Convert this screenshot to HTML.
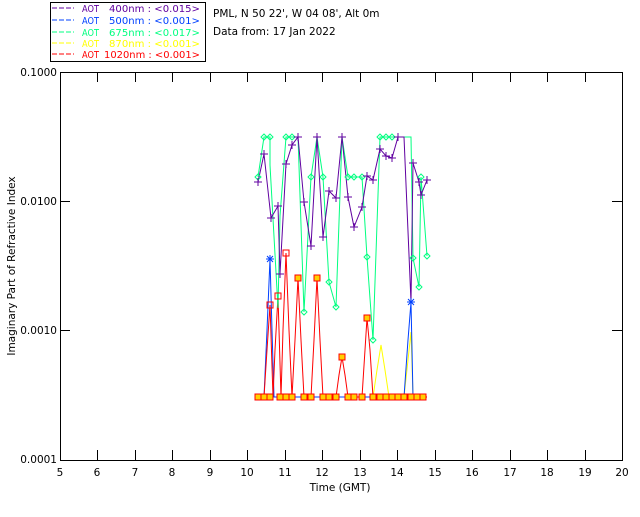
<!DOCTYPE html>
<html><head><style>
body{margin:0;background:#fff;width:640px;height:512px;overflow:hidden}
svg{font-family:"DejaVu Sans","Liberation Sans",sans-serif;font-size:10.5px}
</style></head><body>
<svg width="640" height="512" viewBox="0 0 640 512">
<rect x="50.5" y="2.5" width="155" height="59" fill="none" stroke="#000"/>
<g font-size="10">
<line x1="52" y1="8" x2="74" y2="8" stroke="#6000a0" stroke-dasharray="5,2"/><text x="82" y="12" fill="#6000a0" textLength="17" lengthAdjust="spacingAndGlyphs">AOT</text><text x="109" y="12" fill="#6000a0" textLength="91" lengthAdjust="spacingAndGlyphs">400nm : &lt;0.015&gt;</text>
<line x1="52" y1="20" x2="74" y2="20" stroke="#0040ff" stroke-dasharray="5,2"/><text x="82" y="24" fill="#0040ff" textLength="17" lengthAdjust="spacingAndGlyphs">AOT</text><text x="109" y="24" fill="#0040ff" textLength="91" lengthAdjust="spacingAndGlyphs">500nm : &lt;0.001&gt;</text>
<line x1="52" y1="32" x2="74" y2="32" stroke="#00ff80" stroke-dasharray="5,2"/><text x="82" y="36" fill="#00ff80" textLength="17" lengthAdjust="spacingAndGlyphs">AOT</text><text x="109" y="36" fill="#00ff80" textLength="91" lengthAdjust="spacingAndGlyphs">675nm : &lt;0.017&gt;</text>
<line x1="52" y1="43" x2="74" y2="43" stroke="#ffff00" stroke-dasharray="5,2"/><text x="82" y="47" fill="#ffff00" textLength="17" lengthAdjust="spacingAndGlyphs">AOT</text><text x="109" y="47" fill="#ffff00" textLength="91" lengthAdjust="spacingAndGlyphs">870nm : &lt;0.001&gt;</text>
<line x1="52" y1="54" x2="74" y2="54" stroke="#ff0000" stroke-dasharray="5,2"/><text x="82" y="58" fill="#ff0000" textLength="17" lengthAdjust="spacingAndGlyphs">AOT</text><text x="104" y="58" fill="#ff0000" textLength="96" lengthAdjust="spacingAndGlyphs">1020nm : &lt;0.001&gt;</text>
</g>
<text x="213" y="17">PML, N 50 22', W 04 08', Alt 0m</text>
<text x="213" y="35">Data from: 17 Jan 2022</text>
<rect x="60.5" y="72.5" width="562" height="388" fill="none" stroke="#000"/>
<g stroke="#000" id="ticks">
<path d="M97.5 72v10M135.5 72v10M172.5 72v10M210.5 72v10M247.5 72v10M285.5 72v10M322.5 72v10M360.5 72v10M397.5 72v10M435.5 72v10M472.5 72v10M510.5 72v10M547.5 72v10M585.5 72v10"/>
<path d="M97.5 460v-10M135.5 460v-10M172.5 460v-10M210.5 460v-10M247.5 460v-10M285.5 460v-10M322.5 460v-10M360.5 460v-10M397.5 460v-10M435.5 460v-10M472.5 460v-10M510.5 460v-10M547.5 460v-10M585.5 460v-10"/>
<path d="M60 201.5h10M60 330.5h10M622 201.5h-10M622 330.5h-10"/>
</g>
<g text-anchor="end">
<text x="57" y="76">0.1000</text><text x="57" y="205">0.0100</text><text x="57" y="334">0.0010</text><text x="57" y="463">0.0001</text>
</g>
<g text-anchor="middle">
<text x="60" y="476">5</text><text x="97" y="476">6</text><text x="135" y="476">7</text><text x="172" y="476">8</text><text x="210" y="476">9</text><text x="247" y="476">10</text><text x="285" y="476">11</text><text x="322" y="476">12</text><text x="360" y="476">13</text><text x="397" y="476">14</text><text x="435" y="476">15</text><text x="472" y="476">16</text><text x="510" y="476">17</text><text x="547" y="476">18</text><text x="585" y="476">19</text><text x="622" y="476">20</text>
<text x="340" y="491">Time (GMT)</text>
<text transform="translate(15,266) rotate(-90)">Imaginary Part of Refractive Index</text>
</g>
<polyline fill="none" stroke="#ffff00" stroke-width="1" points="373,397 377,370 381,345 385,370 389,397 404,397 408,360 411,332 413,397"/>
<polyline fill="none" stroke="#0040ff" stroke-width="1" points="264,397 267,330 270,259 272,330 274,397 404,397 408,340 411,302 413,397"/>
<polyline fill="none" stroke="#ff0000" stroke-width="1" points="258,397 264,397 267,350 270,305 273,397 275,350 278,296 281,397 283,330 286,253 289,330 292,397 295,340 298,278 301,340 304,397 311,397 314,340 317,278 320,340 323,397 329,397 336,397 339,375 342,357 345,375 348,397 354,397 362,397 365,350 367,318 370,350 373,397 427,397"/>
<polyline fill="none" stroke="#00ff80" stroke-width="1" points="258,177 264,137 270,137 270,165 278,308 280,216 286,137 292,137 298,137 304,312 311,177 317,137 323,177 329,282 336,307 342,137 348,177 354,177 362,177 367,257 373,340 380,137 386,137 392,137 398,137 404,137 411,137 413,258 419,287 421,177 427,256"/>
<polyline fill="none" stroke="#6000a0" stroke-width="1" points="258,182 264,154 271,218 278,206 280,274 286,164 292,145 298,137 304,202 311,246 317,137 323,237 329,191 336,198 342,137 348,197 354,227 362,207 367,176 373,180 380,149 386,156 392,158 398,137 404,137 411,302 413,163 419,182 421,195 427,180"/>
<g fill="none" stroke="#00ff80">
<path d="M258 174l3 3-3 3-3-3zM264 134l3 3-3 3-3-3zM270 134l3 3-3 3-3-3zM286 134l3 3-3 3-3-3zM292 134l3 3-3 3-3-3zM311 174l3 3-3 3-3-3zM323 174l3 3-3 3-3-3zM329 279l3 3-3 3-3-3zM336 304l3 3-3 3-3-3zM348 174l3 3-3 3-3-3zM354 174l3 3-3 3-3-3zM362 174l3 3-3 3-3-3zM367 254l3 3-3 3-3-3zM373 337l3 3-3 3-3-3zM380 134l3 3-3 3-3-3zM386 134l3 3-3 3-3-3zM392 134l3 3-3 3-3-3zM413 255l3 3-3 3-3-3zM419 284l3 3-3 3-3-3zM421 174l3 3-3 3-3-3zM427 253l3 3-3 3-3-3zM304 309l3 3-3 3-3-3z"/>
</g>
<g stroke="#6000a0">
<path d="M254 182h8M258 178v8M260 154h8M264 150v8M267 218h8M271 214v8M274 206h8M278 202v8M276 274h8M280 270v8M282 164h8M286 160v8M288 145h8M292 141v8M294 137h8M298 133v8M300 202h8M304 198v8M307 246h8M311 242v8M313 137h8M317 133v8M319 237h8M323 233v8M325 191h8M329 187v8M332 198h8M336 194v8M338 137h8M342 133v8M344 197h8M348 193v8M350 227h8M354 223v8M358 207h8M362 203v8M363 176h8M367 172v8M369 180h8M373 176v8M376 149h8M380 145v8M382 156h8M386 152v8M388 158h8M392 154v8M394 137h8M398 133v8M409 163h8M413 159v8M415 182h8M419 178v8M417 195h8M421 191v8M423 180h8M427 176v8"/>
</g>
<g fill="#ffd000" stroke="#ff0000">
<rect x="255" y="394" width="6" height="6"/><rect x="261" y="394" width="6" height="6"/><rect x="267" y="394" width="6" height="6"/><rect x="277" y="394" width="6" height="6"/><rect x="283" y="394" width="6" height="6"/><rect x="289" y="394" width="6" height="6"/><rect x="301" y="394" width="6" height="6"/><rect x="308" y="394" width="6" height="6"/><rect x="320" y="394" width="6" height="6"/><rect x="326" y="394" width="6" height="6"/><rect x="333" y="394" width="6" height="6"/><rect x="345" y="394" width="6" height="6"/><rect x="351" y="394" width="6" height="6"/><rect x="359" y="394" width="6" height="6"/><rect x="370" y="394" width="6" height="6"/><rect x="377" y="394" width="6" height="6"/><rect x="383" y="394" width="6" height="6"/><rect x="389" y="394" width="6" height="6"/><rect x="395" y="394" width="6" height="6"/><rect x="401" y="394" width="6" height="6"/><rect x="408" y="394" width="6" height="6"/><rect x="414" y="394" width="6" height="6"/><rect x="420" y="394" width="6" height="6"/><rect x="295" y="275" width="6" height="6"/><rect x="314" y="275" width="6" height="6"/><rect x="339" y="354" width="6" height="6"/><rect x="364" y="315" width="6" height="6"/>
</g>
<g fill="none" stroke="#ff0000">
<rect x="267" y="302" width="6" height="6"/><rect x="275" y="293" width="6" height="6"/><rect x="283" y="250" width="6" height="6"/>
</g>
<path d="M266 259h8M270 255v8M267 256l6 6M273 256l-6 6M407 302h8M411 298v8M408 299l6 6M414 299l-6 6" stroke="#0040ff"/>
</svg>
</body></html>
